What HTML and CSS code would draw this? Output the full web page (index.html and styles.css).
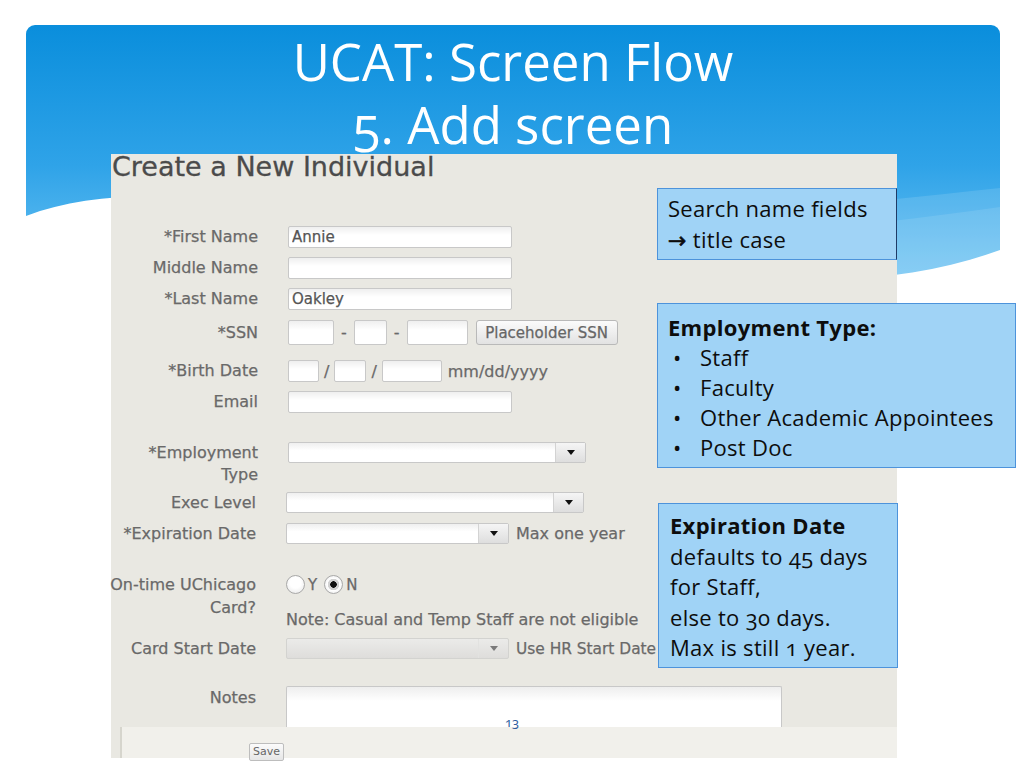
FILE: index.html
```html
<!DOCTYPE html>
<html lang="en">
<head>
    <meta charset="UTF-8">
    <meta name="viewport" content="width=device-width, initial-scale=1.0">
    <title>UCAT: Screen Flow - 5. Add screen</title>
    <link rel="stylesheet" href="styles.css">
</head>
<body>
<div class="slide">
    <header class="banner">
        <svg class="banner-wave" width="974" height="255" viewBox="0 0 974 255">
            <path d="M420,215 C600,200 800,182 974,163 L974,255 L420,255 Z" fill="#fff" opacity=".12"/>
            <path d="M420,240 C600,226 800,206 974,182 L974,255 L420,255 Z" fill="#fff" opacity=".1"/>
            <path d="M0,191 C224,105 674,335 974,225 L974,255 L0,255 Z" fill="#fff"/>
        </svg>
        <h1 class="slide-title">UCAT: Screen Flow<br>5. Add screen</h1>
    </header>

    <div class="panel">
        <h2 class="panel-title">Create a New Individual</h2>
        <div class="form">
            <div class="row">
                <label>*First Name</label>
                <input class="text" type="text" value="Annie">
            </div>
            <div class="row">
                <label>Middle Name</label>
                <input class="text" type="text" value="">
            </div>
            <div class="row">
                <label>*Last Name</label>
                <input class="text" type="text" value="Oakley">
            </div>
            <div class="row row-ssn">
                <label>*SSN</label>
                <div class="inline inline-ssn">
                    <input class="text tall w-46" type="text">
                    <span>-</span>
                    <input class="text tall w-33" type="text">
                    <span>-</span>
                    <input class="text tall w-61" type="text">
                    <button class="btn" type="button">Placeholder SSN</button>
                </div>
            </div>
            <div class="row row-birth">
                <label>*Birth Date</label>
                <div class="inline inline-date">
                    <input class="text w-31" type="text">
                    <span>/</span>
                    <input class="text w-32" type="text">
                    <span>/</span>
                    <input class="text w-60" type="text">
                    <span class="hint">mm/dd/yyyy</span>
                </div>
            </div>
            <div class="row">
                <label>Email</label>
                <input class="text" type="text">
            </div>

            <div class="row row-section row-top">
                <label class="label-wrap">*Employment<br>Type</label>
                <div class="select select-wide"><span class="select-arrow"></span></div>
            </div>
            <div class="row row-exec row-shift">
                <label>Exec Level</label>
                <div class="select select-wide"><span class="select-arrow"></span></div>
            </div>
            <div class="row row-exp row-shift">
                <label>*Expiration Date</label>
                <div class="inline inline-select">
                    <div class="select select-mid"><span class="select-arrow"></span></div>
                    <span>Max one year</span>
                </div>
            </div>

            <div class="row row-section row-top row-shift">
                <label class="label-card">On-time UChicago<br>Card?</label>
                <div>
                    <div class="radios">
                        <input class="radio" type="radio" name="card"><span class="radio-text">Y</span>
                        <input class="radio" type="radio" name="card" checked><span class="radio-text">N</span>
                    </div>
                    <p class="note">Note: Casual and Temp Staff are not eligible</p>
                </div>
            </div>
            <div class="row row-cardstart row-shift">
                <label>Card Start Date</label>
                <div class="inline inline-select">
                    <div class="select select-mid select-disabled"><span class="select-arrow"></span></div>
                    <span class="hr-date">Use HR Start Date</span>
                </div>
            </div>
            <div class="row row-notes row-top row-shift">
                <label class="label-notes">Notes</label>
                <textarea class="notes"></textarea>
            </div>
        </div>
        <div class="panel-bar">
            <button class="save" type="button">Save</button>
        </div>
    </div>

    <div class="callout callout-search">
        Search name fields<br>
        <span class="arrow">&rarr;</span> title case
    </div>

    <div class="callout callout-type">
        <strong>Employment Type:</strong>
        <ul>
            <li>Staff</li>
            <li>Faculty</li>
            <li>Other Academic Appointees</li>
            <li>Post Doc</li>
        </ul>
    </div>

    <div class="callout callout-exp">
        <strong>Expiration Date</strong><br>
        defaults to 45 days<br>
        for Staff,<br>
        else to 30 days.<br>
        Max is still 1 year.
    </div>

    <div class="page-num">13</div>
</div>
</body>
</html>
```

FILE: styles.css
```css
body {
    margin: 0;
    background: #fff;
}
.slide {
    position: relative;
    width: 1024px;
    height: 768px;
    overflow: hidden;
    font-family: "Open Sans", "DejaVu Sans", sans-serif;
}

/* blue title banner */
.banner {
    position: relative;
    margin: 25px 24px 0 26px;
    height: 255px;
    border-radius: 9px 9px 0 0;
    overflow: hidden;
    background: linear-gradient(180deg, #0a8edc 0%, #2fa3e8 55%, #6cc3f3 100%);
}
.banner-wave {
    position: absolute;
    left: 0;
    top: 0;
}
.slide-title {
    position: relative;
    margin: 0;
    padding-top: 5px;
    text-align: center;
    color: #fff;
    font-size: 51px;
    font-weight: 400;
    line-height: 63px;
    font-variant-numeric: oldstyle-nums;
}

/* screenshot of the form */
.panel {
    position: relative;
    margin: -126px 0 0 111px;
    width: 786px;
    background: #e9e8e2;
    font-family: "DejaVu Sans", sans-serif;
    font-size: 16px;
    color: #696969;
    -webkit-text-stroke: 0.25px #696969;
}
.panel-title {
    margin: 0;
    padding-left: 1px;
    font-size: 27px;
    font-weight: 400;
    line-height: 26px;
    color: #4b4b4b;
    -webkit-text-stroke: 0.3px #4b4b4b;
}
.form {
    padding-top: 46px;
}
.row {
    display: grid;
    grid-template-columns: 147px auto;
    column-gap: 30px;
    align-items: center;
    justify-items: start;
}
.row + .row {
    margin-top: 9px;
}
.row label {
    justify-self: end;
    text-align: right;
    white-space: nowrap;
    line-height: 18px;
}
.row-top {
    align-items: start;
}
.row-shift {
    column-gap: 28px;
}
.row-ssn { margin-top: 10px !important; }
.row-birth { margin-top: 15px !important; }
.row-section { margin-top: 29px !important; }
.row-exec { margin-top: 6px !important; }
.row-exp { margin-top: 10px !important; }
.row-cardstart { margin-top: 7px !important; }
.row-notes { margin-top: 27px !important; }

.row .label-wrap {
    line-height: 22px;
}
.row .label-card {
    line-height: 23px;
}
.row .label-notes {
    padding-top: 3px;
}
.row-shift label {
    margin-right: 2px;
}

.text {
    box-sizing: border-box;
    width: 224px;
    height: 22px;
    margin: 0;
    padding: 0 3px;
    border: 1px solid #c8c8c8;
    border-radius: 2px;
    background: linear-gradient(#efefef, #fff 40%);
    font-family: "DejaVu Sans", sans-serif;
    font-size: 15px;
    color: #555;
    -webkit-text-stroke: 0.25px #555;
}
.text.tall { height: 25px; }
.w-31 { width: 31px; }
.w-32 { width: 32px; }
.w-33 { width: 33px; }
.w-46 { width: 46px; }
.w-60 { width: 60px; }
.w-61 { width: 61px; }

.inline {
    display: flex;
    align-items: center;
    white-space: nowrap;
}
.inline-ssn { gap: 7px; }
.inline-date { gap: 5px; }
.inline-select { gap: 7px; }
.inline-ssn .btn { margin-left: 1px; }
.inline-date .hint { margin-left: 1px; }
.hr-date {
    font-size: 15.4px;
}

.btn {
    box-sizing: border-box;
    width: 142px;
    height: 25px;
    padding: 0;
    border: 1px solid #b9b9b9;
    border-radius: 3px;
    background: linear-gradient(#fbfbfb, #e2e2e2);
    font-family: "DejaVu Sans", sans-serif;
    font-size: 15px;
    color: #666;
    -webkit-text-stroke: 0.25px #666;
}

.select {
    box-sizing: border-box;
    display: flex;
    height: 21px;
    border: 1px solid #c8c8c8;
    border-radius: 2px;
    background: linear-gradient(#efefef, #fff 40%);
}
.select-wide { width: 298px; }
.select-mid { width: 223px; }
.select-arrow {
    display: flex;
    align-items: center;
    justify-content: center;
    margin-left: auto;
    width: 29px;
    border-left: 1px solid #d3d3d3;
    background: linear-gradient(#f5f5f5, #dedede);
}
.select-arrow::before {
    content: "";
    border-left: 4px solid transparent;
    border-right: 4px solid transparent;
    border-top: 5px solid #111;
}
.select-disabled {
    border-color: #d3d3d0;
    background: linear-gradient(#ebebe9, #dedddb);
}
.select-disabled .select-arrow {
    border-left-color: #e2e2e0;
    background: none;
}
.select-disabled .select-arrow::before {
    border-top-color: #7a7a7a;
}

.radios {
    display: flex;
    align-items: center;
    height: 23px;
}
.radio {
    appearance: none;
    box-sizing: border-box;
    width: 19px;
    height: 19px;
    margin: 0;
    border: 1px solid #a8a8a8;
    border-radius: 50%;
    background: radial-gradient(circle at 50% 40%, #fff 40%, #e4e4e4 100%);
}
.radio:checked {
    background: radial-gradient(circle, #111 0 3px, #d2d2d2 3.5px 5.5px, #fff 6px, #e4e4e4 100%);
}
.radio-text {
    margin: 0 7px 0 3px;
    font-size: 15px;
}
.note {
    margin: 13px 0 0;
    line-height: 22px;
    white-space: nowrap;
}

.notes {
    box-sizing: border-box;
    display: block;
    width: 496px;
    height: 41px;
    margin: 0;
    border: 1px solid #c8c8c8;
    border-bottom: 0;
    border-radius: 2px 2px 0 0;
    background: linear-gradient(#eeeeee, #fff 35%);
    resize: none;
}

.panel-bar {
    box-sizing: border-box;
    height: 31px;
    margin-left: 9px;
    padding: 13px 0 0 127px;
    border-left: 2px solid #d6d5cd;
    background: #f1f0eb;
}
.save {
    box-sizing: border-box;
    width: 35px;
    height: 18px;
    padding: 0;
    border: 1px solid #bdbdbd;
    border-radius: 2px;
    background: linear-gradient(#fbfbfb, #e6e6e6);
    font-family: "DejaVu Sans", sans-serif;
    font-size: 11px;
    color: #666;
    -webkit-text-stroke: 0;
}

/* callout notes over the screenshot */
.callout {
    position: absolute;
    box-sizing: border-box;
    border: 1px solid #4d93db;
    background: #a0d3f6;
    color: #0d0d0d;
    font-size: 22px;
    letter-spacing: .3px;
    font-variant-numeric: oldstyle-nums;
}
.callout strong {
    font-weight: 700;
}
.callout ul {
    list-style: none;
    margin: 0;
    padding: 0;
}
.callout li::before {
    content: "\2022";
    display: inline-block;
    width: 27px;
    margin-left: 5px;
}
.callout-search {
    left: 657px;
    top: 188px;
    width: 240px;
    height: 72px;
    padding: 4px 10px;
    line-height: 31px;
    border-right-color: #1f3b66;
}
.callout-search .arrow {
    font-family: "DejaVu Sans", sans-serif;
    -webkit-text-stroke: 0.6px #0d0d0d;
}
.callout-type {
    left: 657px;
    top: 303px;
    width: 359px;
    height: 165px;
    padding: 8px 10px 6px;
    line-height: 30px;
}
.callout-exp {
    left: 658px;
    top: 503px;
    width: 240px;
    height: 165px;
    padding: 6px 11px 4px;
    line-height: 30.5px;
}

.page-num {
    position: absolute;
    left: 505px;
    top: 713px;
    font-size: 13px;
    color: #2b5c9e;
    font-variant-numeric: oldstyle-nums;
}
```
